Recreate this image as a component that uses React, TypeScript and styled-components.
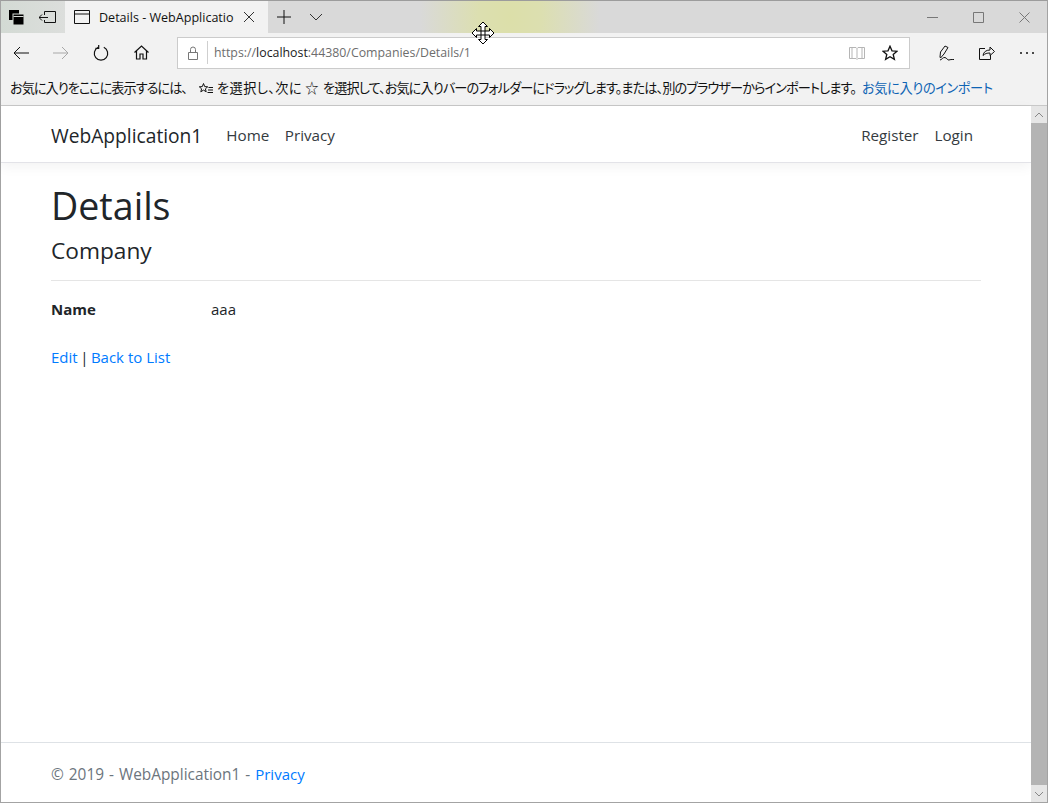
import styled, { createGlobalStyle } from 'styled-components'

const GlobalStyle = createGlobalStyle`
  html, body, #root {
    height: 100%;
    margin: 0;
  }

  body {
    font-family: "Open Sans", "Noto Sans CJK JP", sans-serif;
    overflow: hidden;
  }

  * {
    box-sizing: border-box;
  }
`

const Window = styled.div`
  border: 1px solid #a3a3a3;
  border-top-color: #9c9c9c;
  display: flex;
  flex-direction: column;
  height: 803px;
  position: relative;
  width: 1048px;
`

const TabStrip = styled.div`
  align-items: stretch;
  background: radial-gradient(ellipse 90px 130px at 509px 16px, #dcdfa9 0, #dcdfb0 35%, #d9d9d9 100%), #d9d9d9;
  display: flex;
  flex: 0 0 32px;
`

const TabTools = styled.div`
  align-items: center;
  background: linear-gradient(90deg, #d3dad4, #dcdedc);
  display: flex;
  gap: 15px;
  padding-left: 8px;
  width: 64px;
`

const ActiveTab = styled.div`
  align-items: center;
  background: #f2f2f2;
  color: #111;
  display: flex;
  font-size: 12.55px;
  padding-left: 9px;
  width: 203px;
`

const TabTitle = styled.span`
  margin-left: 9px;
  white-space: nowrap;
  width: 135px;
`

const IconButton = styled.button<{ $w?: number }>`
  align-items: center;
  background: none;
  border: 0;
  color: #111;
  display: flex;
  flex: 0 0 auto;
  justify-content: center;
  padding: 0;
  width: ${p => p.$w ?? 38}px;
`

const MoreButton = styled(IconButton)`
  margin-left: 4px;
`

const Spacer = styled.div`
  flex: 1;
`

const WindowButton = styled.div`
  align-items: center;
  display: flex;
  justify-content: center;
  width: 46px;
`

const Toolbar = styled.div`
  align-items: center;
  background: #f2f2f2;
  display: flex;
  flex: 0 0 37px;
  padding: 2px 0 0 1px;
`

const NavIcons = styled.div`
  display: flex;
  flex: 0 0 auto;
  gap: 2px;
  height: 100%;
  margin-right: 17px;
`

const AddressBar = styled.div`
  align-items: center;
  background: #fff;
  border: 1px solid #cbcbcb;
  display: flex;
  flex: 0 0 733px;
  font-size: 12.35px;
  height: 32px;
  margin-right: 14px;
  padding-left: 9px;
`

const Divider = styled.div`
  background: #cfcfcf;
  height: 23px;
  margin: 0 6px 0 8px;
  width: 1px;
`

const Url = styled.div`
  color: #6d6d6d;
  flex: 1;
  white-space: nowrap;

  b {
    color: #1a1a1a;
    font-weight: 400;
  }
`

const BookIcon = styled.svg`
  flex: 0 0 auto;
  margin-right: 5px;
`

const FavoritesBar = styled.div`
  align-items: center;
  background: #f2f2f2;
  border-bottom: 1px solid #c8c8c8;
  color: #111;
  display: flex;
  flex: 0 0 36px;
  font-family: "Noto Sans CJK JP", sans-serif;
  font-feature-settings: "palt";
  font-size: 13.2px;
  padding-left: 9px;
  white-space: nowrap;
`

const FavoritesText = styled.span<{ $tracking: number; $indent?: number }>`
  letter-spacing: ${p => p.$tracking}px;
  margin-left: ${p => p.$indent ?? 0}px;
`

const FavoritesStar = styled.svg`
  flex: 0 0 auto;
  margin: 0 4px 0 12px;
`

const FavoritesLink = styled.span`
  color: #0f64b4;
  letter-spacing: -0.35px;
  margin-left: 6px;
`

const Viewport = styled.div`
  display: flex;
  flex: 1;
  min-height: 0;
`

const Page = styled.div`
  background: #fff;
  color: #212529;
  display: flex;
  flex: 1;
  flex-direction: column;
`

const Navbar = styled.nav`
  align-items: center;
  border-bottom: 1px solid #e3e3e8;
  box-shadow: 0 4px 12px rgba(0, 0, 0, 0.05);
  display: flex;
  flex: 0 0 57px;
  font-size: 15.2px;
  padding: 2px 58px 0 50px;
`

const Brand = styled.a`
  color: #212529;
  font-size: 19.2px;
  margin-right: 24px;
`

const NavGroup = styled.div<{ $gap: number }>`
  display: flex;
  gap: ${p => p.$gap}px;
`

const NavLink = styled.a`
  color: #343a40;
`

const Main = styled.main`
  flex: 1;
  padding: 0 50px;
`

const Title = styled.h1`
  font-size: 37.6px;
  font-weight: 400;
  line-height: 48px;
  margin: 19px 0 0;
`

const SubTitle = styled.h4`
  font-size: 22.7px;
  font-weight: 400;
  line-height: 29px;
  margin: 6px 0 15px;
`

const Rule = styled.hr`
  border: 0;
  border-top: 1px solid #e5e5e5;
  margin: 0 0 16px;
`

const DetailRow = styled.dl`
  display: grid;
  font-size: 15px;
  grid-template-columns: 160px 1fr;
  line-height: 24px;
  margin: 0 0 24px;
`

const Term = styled.dt`
  font-weight: 700;
`

const Value = styled.dd`
  margin: 0;
`

const Actions = styled.div`
  display: flex;
  font-size: 15px;
  gap: 2.5px;
  line-height: 24px;
`

const Link = styled.a`
  color: #007bff;
`

const Footer = styled.footer`
  align-items: center;
  border-top: 1px solid #dee2e6;
  color: #6c757d;
  display: flex;
  flex: 0 0 60px;
  font-size: 15px;
  padding: 4px 0 0 50px;
`

const FooterLine = styled.div`
  word-spacing: 1px;
`

const FooterText = styled.span`
  font-size: 15.4px;
`

const Scrollbar = styled.div`
  background: #b4b4b4;
  display: flex;
  flex: 0 0 16px;
  flex-direction: column;
  justify-content: space-between;
`

const ScrollArrow = styled.div`
  align-items: center;
  background: #e6e6e6;
  display: flex;
  height: 17px;
  justify-content: center;
`

const CursorOverlay = styled.svg`
  left: 470px;
  position: absolute;
  top: 20px;
`

const stroke = { fill: 'none', stroke: 'currentColor', strokeWidth: 1 }

const App: React.FC = () => (
  <>
    <GlobalStyle />
    <Window>
      <TabStrip>
        <TabTools>
          <svg width="15" height="15" viewBox="0 0 15 15">
            <path d="M0 0h10v3.500H3.500V10H0z" fill="#000" />
            <path d="M4.500 4.500H14.500V14.500H4.500z" fill="#000" />
            <path d="M4.500 6.500H14.500" stroke="#d8dcd8" strokeWidth="1" />
          </svg>
          <svg width="17" height="15" viewBox="0 0 17 15" {...stroke} color="#111">
            <path d="M5.500 5V1.500h11v11h-11V10M0 7.500h9M3 4.500l-3 3 3 3" />
          </svg>
        </TabTools>
        <ActiveTab>
          <svg width="16" height="14" viewBox="0 0 16 14" {...stroke}>
            <path d="M.5.5h15v13H.5zM.5 4h15" />
          </svg>
          <TabTitle>Details - WebApplicatio</TabTitle>
          <IconButton $w={30}>
            <svg width="12" height="12" viewBox="0 0 12 12" {...stroke} color="#333">
              <path d="M1 1l10 10M11 1L1 11" />
            </svg>
          </IconButton>
        </ActiveTab>
        <IconButton $w={32}>
          <svg width="14" height="14" viewBox="0 0 14 14" {...stroke}>
            <path d="M7 0v14M0 7h14" />
          </svg>
        </IconButton>
        <IconButton $w={32}>
          <svg width="14" height="8" viewBox="0 0 14 8" {...stroke} color="#333">
            <path d="M1 1l6 6 6-6" />
          </svg>
        </IconButton>
        <Spacer />
        <WindowButton>
          <svg width="11" height="11" viewBox="0 0 11 11" {...stroke} color="#777">
            <path d="M0 5.500h11" />
          </svg>
        </WindowButton>
        <WindowButton>
          <svg width="11" height="11" viewBox="0 0 11 11" {...stroke} color="#777">
            <path d="M.5.5h10v10H.5z" />
          </svg>
        </WindowButton>
        <WindowButton>
          <svg width="11" height="11" viewBox="0 0 11 11" {...stroke} color="#777">
            <path d="M.5.5l10 10M10.500.5l-10 10" />
          </svg>
        </WindowButton>
      </TabStrip>
      <Toolbar>
        <NavIcons>
          <IconButton>
            <svg width="16" height="14" viewBox="0 0 16 14" {...stroke}>
              <path d="M16 7H1M7 1 1 7l6 6" />
            </svg>
          </IconButton>
          <IconButton>
            <svg width="16" height="14" viewBox="0 0 16 14" {...stroke} color="#a8a8a8">
              <path d="M0 7h15M9 1l6 6-6 6" />
            </svg>
          </IconButton>
          <IconButton>
            <svg width="16" height="16" viewBox="0 0 16 16" {...stroke} strokeWidth="1.200">
              <path d="M5.200 2.300A6.700 6.700 0 1 0 10.800 2.300M5.700 0v3.300H2.400" />
            </svg>
          </IconButton>
          <IconButton>
            <svg width="15" height="15" viewBox="0 0 15 15" {...stroke} strokeWidth="1.200">
              <path d="M.5 7.500 7.500 1l7 6.500M2.500 6v8h3.500V9h3v5h3.500V6" />
            </svg>
          </IconButton>
        </NavIcons>
        <AddressBar>
          <svg width="12" height="14" viewBox="0 0 12 14" {...stroke} color="#777">
            <path d="M1.500 6.500h9v7h-9zM3.500 6.500V3.500a2.500 2.500 0 0 1 5 0v3" />
          </svg>
          <Divider />
          <Url>https://<b>localhost</b>:44380/Companies/Details/1</Url>
          <BookIcon width="16" height="14" viewBox="0 0 16 14" {...stroke} color="#b5b5b5">
            <path d="M.5 1.500h6.500l1 1 1-1h6.500v11H9l-1 1-1-1H.5zM8 2.500v10M3 1.500v11M13 1.500v11" />
          </BookIcon>
          <IconButton $w={39}>
            <svg width="16" height="16" viewBox="0 0 16 16" fill="none" stroke="#111" strokeWidth="1.300">
              <path d="M8 1.200l2 4.600 5 .4-3.800 3.300 1.200 4.900L8 11.800l-4.400 2.600 1.200-4.900L1 6.200l5-.4z" />
            </svg>
          </IconButton>
        </AddressBar>
        <IconButton $w={45}>
          <svg width="16" height="16" viewBox="0 0 16 16" {...stroke}>
            <path d="M1 12 1.500 7 6 1l3 1.500L5 9l-3.500 4zM1 15c1.500 0 3-3 5-2.500 2 .5 2.500 3 4 2.500 1.500-.5 2-.5 5-.5" />
          </svg>
        </IconButton>
        <IconButton $w={36}>
          <svg width="16" height="16" viewBox="0 0 16 16" {...stroke}>
            <path d="M6 3.500H.5v11h11V10M4 10.500c.5-3.500 3-5.500 7-5.500V2l4.500 4.500L11 10.500V8c-3 0-5 .5-7 2.500z" />
          </svg>
        </IconButton>
        <MoreButton $w={36}>
          <svg width="16" height="4" viewBox="0 0 16 4" fill="#111">
            <circle cx="2" cy="2" r="1" />
            <circle cx="8" cy="2" r="1" />
            <circle cx="14" cy="2" r="1" />
          </svg>
        </MoreButton>
      </Toolbar>
      <FavoritesBar>
        <FavoritesText $tracking={-1}>お気に入りをここに表示するには、</FavoritesText>
        <FavoritesStar width="14" height="12" viewBox="0 0 14 12" fill="none" stroke="#111">
          <path d="M4.500 1.500 5.700 4.600l3 .2-2.300 2 .8 3-2.700-1.700-2.700 1.700.8-3-2.300-2 3-.2z" />
          <path d="M9.500 5.500H14M9 8h5M8.500 10.500H14" />
        </FavoritesStar>
        <FavoritesText $tracking={0.4}>を選択し、次に ☆</FavoritesText>
        <FavoritesText $tracking={-0.92} $indent={4}>を選択して、お気に入りバーのフォルダーにドラッグします。または、別のブラウザーからインポートします。</FavoritesText>
        <FavoritesLink>お気に入りのインポート</FavoritesLink>
      </FavoritesBar>
      <Viewport>
        <Page>
          <Navbar>
            <Brand>WebApplication1</Brand>
            <NavGroup $gap={15.5}>
              <NavLink>Home</NavLink>
              <NavLink>Privacy</NavLink>
            </NavGroup>
            <Spacer />
            <NavGroup $gap={16}>
              <NavLink>Register</NavLink>
              <NavLink>Login</NavLink>
            </NavGroup>
          </Navbar>
          <Main>
            <Title>Details</Title>
            <SubTitle>Company</SubTitle>
            <Rule />
            <DetailRow>
              <Term>Name</Term>
              <Value>aaa</Value>
            </DetailRow>
            <Actions>
              <Link>Edit</Link>
              <span>|</span>
              <Link>Back to List</Link>
            </Actions>
          </Main>
          <Footer>
            <FooterLine>
              <FooterText>© 2019 - WebApplication1 -</FooterText> <Link>Privacy</Link>
            </FooterLine>
          </Footer>
        </Page>
        <Scrollbar>
          <ScrollArrow>
            <svg width="10" height="6" viewBox="0 0 10 6" fill="none" stroke="#888">
              <path d="M1 5l4-4 4 4" />
            </svg>
          </ScrollArrow>
          <ScrollArrow>
            <svg width="10" height="6" viewBox="0 0 10 6" fill="none" stroke="#888">
              <path d="M1 1l4 4 4-4" />
            </svg>
          </ScrollArrow>
        </Scrollbar>
      </Viewport>
      <CursorOverlay width="24" height="24" viewBox="0 0 24 24">
        <path d="M12 1l4.500 4.500H14V10h4.500V7.500L23 12l-4.500 4.500V14H14v4.500h2.500L12 23l-4.500-4.500H10V14H5.500v2.500L1 12l4.500-4.500V10H10V5.500H7.500z" fill="#fff" stroke="#000" />
        <path d="M10 10h4v4h-4z" fill="#fff" stroke="#000" />
      </CursorOverlay>
    </Window>
  </>
)

export default App
